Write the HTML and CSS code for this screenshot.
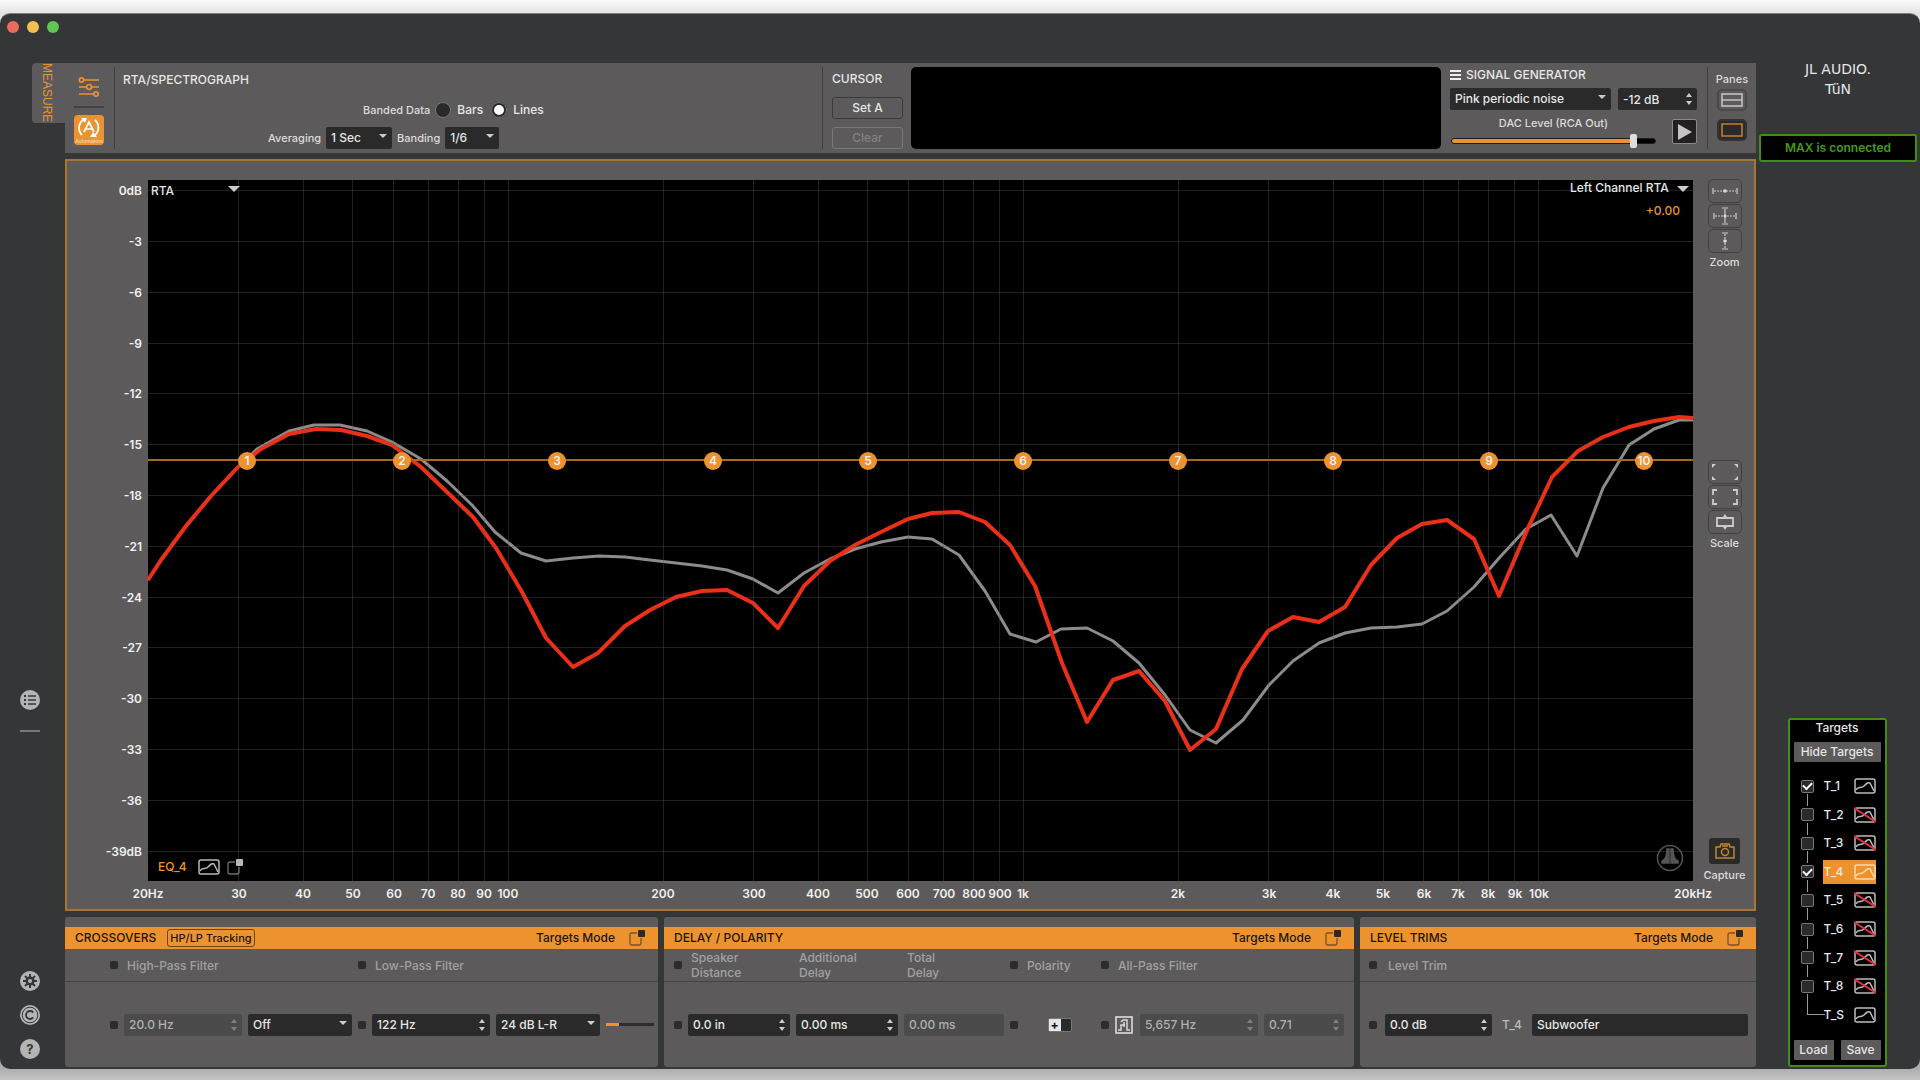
FILE: index.html
```html
<!DOCTYPE html>
<html lang="en">
<head>
    <meta charset="UTF-8">
    <meta name="viewport" content="width=device-width, initial-scale=1.0">
    <title>JL Audio TüN</title>
    <link rel="stylesheet" href="styles.css">
</head>
<body>

    <!-- Shared icons -->
    <svg class="sprite" aria-hidden="true">
        <symbol id="curve" viewBox="0 0 22 16">
            <rect x="1" y="1" width="20" height="14" rx="2" fill="none" stroke="currentColor" stroke-width="1.5"/>
            <path d="M2 12C4 8 7 11 10 8S14 4 16 5L20 13" fill="none" stroke="currentColor" stroke-width="1.5"/>
        </symbol>
        <symbol id="curve-off" viewBox="0 0 22 16">
            <rect x="1" y="1" width="20" height="14" rx="2" fill="none" stroke="currentColor" stroke-width="1.5"/>
            <path d="M2 12C4 8 7 11 10 8S14 4 16 5L20 13" fill="none" stroke="currentColor" stroke-width="1.5"/>
            <path d="M0 1L22 15" stroke="#e0303c" stroke-width="2"/>
        </symbol>
        <symbol id="popout" viewBox="0 0 16 16">
            <path d="M8 3H3Q1 3 1 5V13Q1 15 3 15H10Q12 15 12 13V8" fill="none" stroke="currentColor" stroke-opacity=".6" stroke-width="1.3"/>
            <rect x="9" y="0" width="7" height="7" rx="1" fill="currentColor"/>
        </symbol>
    </svg>

    <div class="window">
        <div class="titlebar">
            <span class="light red"></span>
            <span class="light yellow"></span>
            <span class="light green"></span>
        </div>

        <div class="layout">
            <!-- Left rail -->
            <nav class="rail">
                <button class="tab">MEASURE</button>
                <div class="rail-icons">
                    <button class="icon" aria-label="List">
                        <svg width="20" height="20" viewBox="0 0 20 20"><circle cx="10" cy="10" r="10" fill="#b4b4b6"/><path d="M4 6H6M4 10H6M4 14H6" stroke="#343638" stroke-width="2"/><path d="M8 6H16M8 10H16M8 14H16" stroke="#343638" stroke-width="1.4"/></svg>
                    </button>
                    <hr>
                    <button class="icon" aria-label="Settings">
                        <svg width="20" height="20" viewBox="0 0 20 20"><circle cx="10" cy="10" r="10" fill="#b4b4b6"/><path d="M10 3V17M3 10H17M5 5L15 15M15 5L5 15" stroke="#343638" stroke-width="2"/><circle cx="10" cy="10" r="4.6" fill="#343638"/><circle cx="10" cy="10" r="2" fill="#b4b4b6"/></svg>
                    </button>
                    <button class="icon" aria-label="Copyright">
                        <svg width="20" height="20" viewBox="0 0 20 20"><circle cx="10" cy="10" r="10" fill="#b4b4b6"/><circle cx="10" cy="10" r="7.8" fill="none" stroke="#343638"/><path d="M13.2 7.6A4 4 0 1 0 13.2 12.4" fill="none" stroke="#343638" stroke-width="1.8"/></svg>
                    </button>
                    <button class="icon help" aria-label="Help">?</button>
                </div>
            </nav>

            <main class="main">
                <!-- Toolbar -->
                <header class="toolbar">
                    <div class="modes">
                        <button class="icon" aria-label="Mixer">
                            <svg width="22" height="22" viewBox="0 0 22 22" fill="none" stroke="#ec932f" stroke-width="1.7"><path d="M6 4H21M1 11H8M14 11H21M1 18H15"/><circle cx="3.5" cy="4" r="2.2"/><circle cx="11" cy="11" r="2.5"/><circle cx="18" cy="18" r="2.2"/></svg>
                        </button>
                        <hr>
                        <button class="automation" aria-label="Automation">
                            <svg width="30" height="30" viewBox="0 0 30 30"><path d="M9 5A10 10 0 0 0 8 20M21 5A10 10 0 0 1 21 20" fill="none" stroke="#fff" stroke-width="1.8"/><path d="M7 3H13L11 8ZM23 22H16L19 17Z" fill="#fff"/><path d="M10 17L15 7L20 17M12 14H18" fill="none" stroke="#fff" stroke-width="1.7"/><text x="15" y="28" text-anchor="middle" class="tiny">Automation</text></svg>
                        </button>
                    </div>

                    <section class="rta">
                        <h2>RTA/SPECTROGRAPH</h2>
                        <div class="rta-line band">
                            <span class="small">Banded Data</span>
                            <label><input type="radio" name="band"> Bars</label>
                            <label><input type="radio" name="band" checked> Lines</label>
                        </div>
                        <div class="rta-line">
                            <label class="small" for="avg">Averaging</label>
                            <span class="select avg"><select id="avg"><option>1 Sec</option></select></span>
                            <label class="small" for="banding">Banding</label>
                            <span class="select banding"><select id="banding"><option>1/6</option></select></span>
                        </div>
                    </section>

                    <section class="cursor">
                        <h2>CURSOR</h2>
                        <button class="outline">Set A</button>
                        <button class="outline" disabled>Clear</button>
                    </section>

                    <div class="display"></div>

                    <section class="generator">
                        <h2><svg width="11" height="10" viewBox="0 0 11 10"><path d="M0 1H11M0 5H11M0 9H11" stroke="#eee" stroke-width="2"/></svg>SIGNAL GENERATOR</h2>
                        <div class="gen-row">
                            <span class="select noise"><select aria-label="Signal"><option>Pink periodic noise</option></select></span>
                            <span class="spin level"><input type="text" value="-12 dB" aria-label="Signal level"></span>
                        </div>
                        <div class="gen-row">
                            <div class="dac">
                                <label class="small" for="dac">DAC Level (RCA Out)</label>
                                <input type="range" id="dac" min="0" max="100" value="91">
                            </div>
                            <button class="play" aria-label="Play"><svg width="14" height="16" viewBox="0 0 14 16"><path d="M0 0L14 8L0 16Z" fill="#c4c4c4"/></svg></button>
                        </div>
                    </section>

                    <section class="panes">
                        <span class="small">Panes</span>
                        <button class="pane" aria-label="Two panes"><svg width="22" height="14" viewBox="0 0 22 14"><path d="M1 1H21V13H1ZM1 7H21" fill="none" stroke="#c8c8c8" stroke-width="1.5"/></svg></button>
                        <button class="pane on" aria-label="One pane"><svg width="22" height="14" viewBox="0 0 22 14"><path d="M1 1H21V13H1Z" fill="none" stroke="#c87e2c" stroke-width="1.5"/></svg></button>
                    </section>
                </header>

                <!-- Graph -->
                <section class="graph">
                    <div class="plot">
                        <svg class="chart" viewBox="-81 -19 1634 748" role="img" aria-label="RTA response">
                            <rect width="1545" height="701" fill="#000"/>
                            <path class="trace gray" d="M0 400L13 380L38 346L63 316L90 287L109 269L141 251L166 245L192 245L219 251L244 262L273 279L299 301L324 325L347 352L373 373L398 381L425 378L451 376L477 377L502 380L528 383L554 386L579 390L605 399L630 413L656 393L682 379L707 369L733 362L760 357L784 359L811 375L837 411L862 454L888 462L913 449L939 448L965 461L991 483L1017 515L1042 550L1068 563L1095 540L1121 505L1145 481L1171 463L1197 453L1223 448L1249 447L1274 444L1299 431L1326 407L1352 377L1378 349L1403 335L1429 376L1455 308L1481 265L1506 249L1531 240L1545 240"/>
                            <path class="trace red-line" d="M0 400L13 380L38 346L63 316L90 287L113 269L141 254L168 249L193 250L219 256L244 265L273 287L299 312L325 337L348 368L374 412L398 458L425 487L450 473L477 446L502 430L528 417L554 411L579 410L605 423L630 448L656 406L682 381L707 365L733 352L760 339L784 333L811 332L837 342L862 365L887 406L914 483L939 542L965 500L991 491L1017 521L1042 570L1068 549L1094 489L1120 451L1145 437L1171 442L1197 427L1223 385L1249 358L1274 344L1299 340L1326 359L1351 416L1380 348L1404 297L1430 271L1455 257L1481 247L1506 241L1531 237L1545 238"/>
                            <path class="grid" d="M0 10.5H1545M0 61.5H1545M0 112.5H1545M0 163.5H1545M0 213.5H1545M0 264.5H1545M0 315.5H1545M0 366.5H1545M0 417.5H1545M0 467.5H1545M0 518.5H1545M0 569.5H1545M0 620.5H1545M0 671.5H1545"/>
                            <path class="grid" d="M90.5 0V701M155.5 0V701M204.5 0V701M245.5 0V701M280.5 0V701M310.5 0V701M336.5 0V701M360.5 0V701M515.5 0V701M605.5 0V701M670.5 0V701M719.5 0V701M760.5 0V701M795.5 0V701M825.5 0V701M851.5 0V701M875.5 0V701M1030.5 0V701M1120.5 0V701M1185.5 0V701M1235.5 0V701M1275.5 0V701M1310.5 0V701M1340.5 0V701M1366.5 0V701M1390.5 0V701"/>

                            <!-- EQ bands -->
                            <path d="M0 280H1545" stroke="#a8691f" stroke-width="2"/>
                            <g fill="#ec932f">
                                <circle cx="99" cy="281" r="9"/><circle cx="254" cy="281" r="9"/><circle cx="409" cy="281" r="9"/><circle cx="565" cy="281" r="9"/><circle cx="720" cy="281" r="9"/><circle cx="875" cy="281" r="9"/><circle cx="1030" cy="281" r="9"/><circle cx="1185" cy="281" r="9"/><circle cx="1341" cy="281" r="9"/><circle cx="1496" cy="281" r="9"/>
                            </g>
                            <g class="axis" text-anchor="middle">
                                <text x="99" y="285">1</text><text x="254" y="285">2</text><text x="409" y="285">3</text><text x="565" y="285">4</text><text x="720" y="285">5</text><text x="875" y="285">6</text><text x="1030" y="285">7</text><text x="1185" y="285">8</text><text x="1341" y="285">9</text><text x="1496" y="285">10</text>
                            </g>

                            <!-- Level axis -->
                            <g class="axis" text-anchor="end">
                                <text x="-6" y="15">0dB</text><text x="-6" y="66">-3</text><text x="-6" y="117">-6</text><text x="-6" y="168">-9</text><text x="-6" y="218">-12</text><text x="-6" y="269">-15</text><text x="-6" y="320">-18</text><text x="-6" y="371">-21</text><text x="-6" y="422">-24</text><text x="-6" y="472">-27</text><text x="-6" y="523">-30</text><text x="-6" y="574">-33</text><text x="-6" y="625">-36</text><text x="-6" y="676">-39dB</text>
                            </g>

                            <!-- Frequency axis -->
                            <g class="axis" text-anchor="middle">
                                <text x="0" y="718">20Hz</text><text x="91" y="718">30</text><text x="155" y="718">40</text><text x="205" y="718">50</text><text x="246" y="718">60</text><text x="280" y="718">70</text><text x="310" y="718">80</text><text x="336" y="718">90</text><text x="360" y="718">100</text><text x="515" y="718">200</text><text x="606" y="718">300</text><text x="670" y="718">400</text><text x="719" y="718">500</text><text x="760" y="718">600</text><text x="796" y="718">700</text><text x="826" y="718">800</text><text x="852" y="718">900</text><text x="875" y="718">1k</text><text x="1030" y="718">2k</text><text x="1121" y="718">3k</text><text x="1185" y="718">4k</text><text x="1235" y="718">5k</text><text x="1276" y="718">6k</text><text x="1310" y="718">7k</text><text x="1340" y="718">8k</text><text x="1367" y="718">9k</text><text x="1391" y="718">10k</text><text x="1545" y="718">20kHz</text>
                            </g>

                            <g stroke="#555" fill="none" stroke-width="1.5">
                                <circle cx="1522" cy="678" r="12.5"/>
                                <path d="M1521 669H1519C1519 677 1517 680 1514 681V683H1521ZM1523 669H1525C1525 677 1527 680 1530 681V683H1523Z" fill="#555"/>
                            </g>
                        </svg>

                        <span class="overlay top-left select"><select aria-label="View"><option>RTA</option></select></span>
                        <div class="overlay top-right">
                            <span class="select"><select aria-label="Channel"><option>Left Channel RTA</option></select></span>
                            <span class="gain">+0.00</span>
                        </div>
                        <div class="overlay bottom-left">
                            <span>EQ_4</span>
                            <svg width="22" height="16"><use href="#curve"/></svg>
                            <svg width="16" height="16"><use href="#popout"/></svg>
                        </div>
                    </div>

                    <aside class="tools">
                        <div class="tool-group">
                            <button class="tool" aria-label="Zoom horizontal"><svg width="26" height="20" viewBox="0 0 26 20"><path d="M1 7V13M25 7V13" class="ln"/><path d="M2 10H24" class="ln dash"/><circle cx="13" cy="10" r="1.8" fill="#ddd"/></svg></button>
                            <button class="tool" aria-label="Zoom both"><svg width="26" height="20" viewBox="0 0 26 20"><path d="M2 7V13M24 7V13M10 2H16M10 18H16M13 3V17" class="ln"/><path d="M3 10H23" class="ln dash"/><circle cx="13" cy="10" r="1.5" fill="#ddd"/></svg></button>
                            <button class="tool" aria-label="Zoom vertical"><svg width="26" height="20" viewBox="0 0 26 20"><path d="M10 2H16M10 18H16" class="ln"/><path d="M13 3V17" class="ln dash"/><circle cx="13" cy="10" r="1.8" fill="#ddd"/></svg></button>
                            <span class="small">Zoom</span>
                        </div>
                        <div class="tool-group scale">
                            <button class="tool" aria-label="Scale out"><svg width="26" height="16" viewBox="0 0 26 16"><path d="M0 0H4L0 4ZM26 0H22L26 4ZM0 16H4L0 12ZM26 16H22L26 12Z" fill="#ccc"/></svg></button>
                            <button class="tool" aria-label="Scale in"><svg width="26" height="16" viewBox="0 0 26 16"><path d="M1 6V1H5M21 1H25V6M25 10V15H21M5 15H1V10" class="ln wide"/></svg></button>
                            <button class="tool" aria-label="Scale fit"><svg width="26" height="16" viewBox="0 0 26 16"><path d="M5 4H21V12H5Z" class="ln wide"/><path d="M11 3L13 0L15 3ZM11 13L13 16L15 13Z" fill="#ccc"/></svg></button>
                            <span class="small">Scale</span>
                        </div>
                        <div class="tool-group capture">
                            <button class="camera" aria-label="Capture"><svg width="20" height="16" viewBox="0 0 20 16" fill="none" stroke="#c08530" stroke-width="1.5"><path d="M1 4H5L6 1H14L15 4H19V15H1Z"/><circle cx="10" cy="9" r="3.5"/><path d="M7 3H13"/></svg></button>
                            <span class="small">Capture</span>
                        </div>
                    </aside>
                </section>

                <!-- Bottom panels -->
                <div class="panels">
                    <section class="panel">
                        <div class="bar">
                            <h3>CROSSOVERS</h3>
                            <button class="tracking">HP/LP Tracking</button>
                            <span class="mode">Targets Mode</span>
                            <svg width="16" height="16"><use href="#popout"/></svg>
                        </div>
                        <div class="cols cross head">
                            <input type="checkbox" id="hp"><label class="wide-2" for="hp">High-Pass Filter</label>
                            <input type="checkbox" id="lp"><label class="wide-3" for="lp">Low-Pass Filter</label>
                        </div>
                        <div class="cols cross body">
                            <input type="checkbox" aria-label="High-pass channel">
                            <span class="spin"><input type="text" value="20.0 Hz" aria-label="High-pass frequency" disabled></span>
                            <span class="select"><select aria-label="High-pass slope"><option>Off</option></select></span>
                            <input type="checkbox" aria-label="Low-pass channel">
                            <span class="spin"><input type="text" value="122 Hz" aria-label="Low-pass frequency"></span>
                            <span class="select"><select aria-label="Low-pass slope"><option>24 dB L-R</option></select></span>
                            <span class="meter"></span>
                        </div>
                    </section>

                    <section class="panel">
                        <div class="bar">
                            <h3>DELAY / POLARITY</h3>
                            <span class="mode">Targets Mode</span>
                            <svg width="16" height="16"><use href="#popout"/></svg>
                        </div>
                        <div class="cols delay head">
                            <input type="checkbox" id="dist"><label for="dist">Speaker<br>Distance</label>
                            <span>Additional<br>Delay</span>
                            <span>Total<br>Delay</span>
                            <input type="checkbox" id="pol"><label for="pol">Polarity</label>
                            <input type="checkbox" id="apf"><label class="wide-3" for="apf">All-Pass Filter</label>
                        </div>
                        <div class="cols delay body">
                            <input type="checkbox" aria-label="Delay channel">
                            <span class="spin"><input type="text" value="0.0 in" aria-label="Speaker distance"></span>
                            <span class="spin"><input type="text" value="0.00 ms" aria-label="Additional delay"></span>
                            <input type="text" value="0.00 ms" aria-label="Total delay" disabled>
                            <input type="checkbox" aria-label="Polarity channel">
                            <button class="toggle" aria-label="Invert polarity"><span>+</span></button>
                            <input type="checkbox" aria-label="All-pass channel">
                            <button class="icon" aria-label="All-pass type"><svg width="18" height="18" viewBox="0 0 18 18" fill="none" stroke="#ddd"><rect x="1" y="1" width="16" height="16" stroke-width="1.6"/><path d="M3 14H6V9H10M6 6Q7 4 9 4H12V14H15M9 6V11" stroke-width="1.4"/></svg></button>
                            <span class="spin"><input type="text" value="5,657 Hz" aria-label="All-pass frequency" disabled></span>
                            <span class="spin"><input type="text" value="0.71" aria-label="All-pass Q" disabled></span>
                        </div>
                    </section>

                    <section class="panel">
                        <div class="bar">
                            <h3>LEVEL TRIMS</h3>
                            <span class="mode">Targets Mode</span>
                            <svg width="16" height="16"><use href="#popout"/></svg>
                        </div>
                        <div class="cols trims head">
                            <input type="checkbox" id="trim"><label for="trim">Level Trim</label>
                        </div>
                        <div class="cols trims body">
                            <input type="checkbox" aria-label="Trim channel">
                            <span class="spin"><input type="text" value="0.0 dB" aria-label="Level trim"></span>
                            <label for="name">T_4</label>
                            <input type="text" id="name" value="Subwoofer">
                        </div>
                    </section>
                </div>
            </main>

            <!-- Right rail -->
            <aside class="side">
                <div class="logo"><span>JL AUDIO.</span><span>TüN</span></div>
                <div class="status">MAX is connected</div>

                <section class="targets">
                    <h3>Targets</h3>
                    <button>Hide Targets</button>
                    <ul>
                        <li><input type="checkbox" id="t1" checked><label for="t1">T_1<svg width="22" height="16"><use href="#curve"/></svg></label></li>
                        <li><input type="checkbox" id="t2"><label for="t2">T_2<svg width="22" height="16"><use href="#curve-off"/></svg></label></li>
                        <li><input type="checkbox" id="t3"><label for="t3">T_3<svg width="22" height="16"><use href="#curve-off"/></svg></label></li>
                        <li class="active"><input type="checkbox" id="t4" checked><label for="t4">T_4<svg width="22" height="16"><use href="#curve"/></svg></label></li>
                        <li><input type="checkbox" id="t5"><label for="t5">T_5<svg width="22" height="16"><use href="#curve-off"/></svg></label></li>
                        <li><input type="checkbox" id="t6"><label for="t6">T_6<svg width="22" height="16"><use href="#curve-off"/></svg></label></li>
                        <li><input type="checkbox" id="t7"><label for="t7">T_7<svg width="22" height="16"><use href="#curve-off"/></svg></label></li>
                        <li><input type="checkbox" id="t8"><label for="t8">T_8<svg width="22" height="16"><use href="#curve-off"/></svg></label></li>
                        <li class="sum"><span>T_S<svg width="22" height="16"><use href="#curve"/></svg></span></li>
                    </ul>
                    <div class="files">
                        <button>Load</button>
                        <button>Save</button>
                    </div>
                </section>
            </aside>
        </div>
    </div>

</body>
</html>
```
FILE: styles.css
```css
* {
    box-sizing: border-box;
}
body {
    margin: 0;
    height: 100vh;
    padding: 13px 0 11px;
    background: linear-gradient(#fafafa, #e4e4e4 13px, #acacac 1068px, #c4c4c4);
    font-family: Inter, "Liberation Sans", sans-serif;
    font-size: 12px;
    font-weight: 500;
    line-height: 16px;
    color: #e6e6e6;
}
h2, h3 {
    margin: 0;
    font-size: 12px;
    font-weight: 500;
    line-height: 16px;
}
button, input, select {
    font: inherit;
    color: inherit;
    margin: 0;
}
button {
    padding: 0;
    border: 0;
    background: none;
}
hr {
    margin: 0;
    border: 0;
}
svg {
    display: block;
    flex-shrink: 0;
}
.sprite {
    position: absolute;
    width: 0;
    height: 0;
}
.small {
    font-size: 11px;
    color: #dcdcdc;
}
.tiny {
    font-size: 5px;
    fill: #fbd9b0;
}

/* Window */
.window {
    height: 100%;
    display: flex;
    flex-direction: column;
    padding-bottom: 2px;
    background: #343638;
    border-top: 1px solid #808080;
    border-radius: 10px;
}
.titlebar {
    display: flex;
    gap: 8px;
    height: 49px;
    padding: 7px;
    flex-shrink: 0;
}
.light {
    width: 12px;
    height: 12px;
    border-radius: 50%;
}
.light.red { background: #ec6a5e; }
.light.yellow { background: #f4bf4f; }
.light.green { background: #61c554; }

.layout {
    flex: 1;
    min-height: 0;
    display: flex;
}

/* Left rail */
.rail {
    width: 65px;
    display: flex;
    flex-direction: column;
}
.tab {
    align-self: flex-end;
    width: 33px;
    height: 60px;
    padding-right: 4px;
    writing-mode: vertical-rl;
    font: 12px/14px "Liberation Sans", sans-serif;
    color: #ec932f;
    background: #5c5a5b;
    border-radius: 4px 0 0 4px;
}
.rail-icons {
    width: 60px;
    margin-top: auto;
    padding-bottom: 8px;
    display: flex;
    flex-direction: column;
    align-items: center;
    gap: 14px;
}
.rail-icons hr {
    width: 20px;
    height: 2px;
    margin: 6px 0 225px;
    background: #77787a;
}
.help {
    width: 20px;
    height: 20px;
    border-radius: 50%;
    background: #b4b4b6;
    color: #343638;
    font-size: 13px;
    font-weight: 700;
}

/* Toolbar */
.main {
    flex: 1;
    min-width: 0;
    display: flex;
    flex-direction: column;
    gap: 6px;
}
.toolbar {
    height: 90px;
    padding: 4px 0;
    display: flex;
    flex-shrink: 0;
    background: #5c5a5b;
}
.modes {
    width: 50px;
    padding: 9px 10px 4px 9px;
    display: flex;
    flex-direction: column;
    align-items: center;
    justify-content: space-between;
    border-right: 1px solid #403f40;
}
.modes hr {
    width: 30px;
    height: 2px;
    background: #434243;
}
.automation {
    background: #ec932f;
    border-radius: 4px;
}
.rta {
    flex: 1;
    padding: 5px 0 0 8px;
    border-right: 1px solid #403f40;
}
.rta-line {
    display: flex;
    align-items: center;
    gap: 5px;
    height: 22px;
    padding-left: 145px;
}
.rta-line.band {
    height: 24px;
    margin: 10px 0 5px;
    padding-left: 240px;
}
.rta-line.band label {
    display: flex;
    align-items: center;
    gap: 6px;
    margin-right: 3px;
}
input[type="radio"] {
    appearance: none;
    width: 16px;
    height: 16px;
    border-radius: 50%;
    border: 1px solid #777;
    background: #2a2a2a;
}
input[type="radio"]:checked {
    border: 3px solid #2a2a2a;
    background: #fff;
    outline: 1px solid #777;
    outline-offset: -1px;
}

/* Form fields */
.select, .spin {
    position: relative;
    display: block;
    min-width: 0;
}
select, input[type="text"] {
    appearance: none;
    display: block;
    width: 100%;
    height: 22px;
    padding: 0 5px;
    border: 0;
    border-radius: 2px;
    background: #2a2a2a;
    color: #e6e6e6;
    outline: 0;
}
input[type="text"]:disabled {
    background: #4c4b4c;
    color: #b0b0b0;
}
.select::after {
    content: "";
    position: absolute;
    right: 5px;
    top: 7px;
    border: 4px solid transparent;
    border-top-color: #ccc;
    border-bottom: 0;
    pointer-events: none;
}
.spin::before, .spin::after {
    content: "";
    position: absolute;
    right: 5px;
    border: 3px solid transparent;
}
.spin::before {
    top: 5px;
    border-bottom: 4px solid #ccc;
    border-top: 0;
}
.spin::after {
    bottom: 5px;
    border-top: 4px solid #ccc;
    border-bottom: 0;
}
.spin:has(:disabled)::before, .spin:has(:disabled)::after {
    opacity: .4;
}
.avg { width: 66px; }
.banding { width: 54px; }
.noise { width: 161px; }
.level { width: 79px; }

.cursor {
    width: 88px;
    padding: 4px 8px 0 9px;
}
.outline {
    display: block;
    width: 71px;
    height: 22px;
    margin-top: 10px;
    border: 1px solid #3c3b3c;
    border-radius: 3px;
}
.outline + .outline {
    margin-top: 8px;
}
.outline:disabled {
    border-color: #777;
    color: #828182;
}
.display {
    width: 530px;
    background: #000;
    border-radius: 5px;
}
.generator {
    width: 267px;
    padding: 0 10px 0 9px;
    border-right: 1px solid #403f40;
}
.generator h2 {
    display: flex;
    align-items: center;
    gap: 5px;
    margin-bottom: 5px;
}
.gen-row {
    display: flex;
    justify-content: space-between;
    align-items: center;
    gap: 7px;
    margin-bottom: 5px;
}
.dac {
    display: flex;
    flex-direction: column;
    align-items: center;
    width: 207px;
}
input[type="range"] {
    appearance: none;
    width: 205px;
    height: 14px;
    margin-top: 3px;
    background: none;
}
input[type="range"]::-webkit-slider-runnable-track {
    height: 6px;
    border-radius: 3px;
    border: 1px solid #1c1c1c;
    background: linear-gradient(90deg, #ec932f 90%, #000 90%);
}
input[type="range"]::-webkit-slider-thumb {
    appearance: none;
    width: 7px;
    height: 14px;
    margin-top: -5px;
    border-radius: 2px;
    background: #dedede;
}
.play {
    display: grid;
    place-items: center;
    width: 25px;
    height: 25px;
    background: #232021;
    border: 1px solid #8a8a8a;
    border-radius: 2px;
}
.panes {
    width: 48px;
    display: flex;
    flex-direction: column;
    align-items: center;
    padding-top: 4px;
}
.pane {
    display: grid;
    place-items: center;
    width: 30px;
    height: 22px;
    margin-top: 2px;
    border: 2px solid #4a494a;
    border-radius: 5px;
}
.pane.on {
    margin-top: 8px;
    background: #2a2a2a;
    border-color: #333;
}

/* Graph */
.graph {
    flex: 1;
    min-height: 0;
    display: flex;
    background: #5c5a5b;
    border: 2px solid #a87432;
}
.plot {
    position: relative;
    flex: 1;
    min-width: 0;
}
.chart {
    width: 100%;
    height: 100%;
    overflow: visible;
}
.grid {
    stroke: rgba(95, 95, 95, .35);
    fill: none;
}
.trace {
    fill: none;
    stroke-width: 4;
    stroke-linejoin: round;
}
.trace.gray { stroke: #8c8c8c; stroke-width: 3; }
.trace.red-line { stroke: #ec2f18; }
.axis {
    font-size: 12px;
    font-weight: 600;
    fill: #f0f0f0;
}
.overlay {
    position: absolute;
}
.overlay select {
    height: 18px;
    padding: 0;
    background: none;
}
.overlay .select::after, .overlay.select::after {
    right: 0;
    border-width: 6px;
    border-bottom: 0;
}
.top-left {
    left: 84px;
    top: 21px;
    width: 89px;
}
.overlay.top-left::after {
    top: 4px;
}
.top-right {
    top: 18px;
    right: 12px;
    display: flex;
    flex-direction: column;
    align-items: flex-end;
    gap: 6px;
}
.top-right .select {
    width: 119px;
}
.gain {
    margin-right: 9px;
    color: #ec932f;
}
.bottom-left {
    left: 91px;
    bottom: 34px;
    display: flex;
    align-items: center;
    gap: 11px;
    color: #ec932f;
}
.bottom-left svg {
    color: #b8b8b8;
}
.bottom-left svg:last-child {
    margin-left: -4px;
}
.tools {
    width: 53px;
    padding: 18px 6px 26px 0;
    display: flex;
    flex-direction: column;
}
.tool-group {
    display: flex;
    flex-direction: column;
    align-items: center;
    gap: 1px;
}
.tool-group.scale { margin-top: 190px; }
.tool-group.capture { margin-top: auto; }
.tool {
    display: grid;
    place-items: center;
    width: 34px;
    height: 24px;
    border: 1px solid #424142;
    border-radius: 5px;
}
.ln {
    fill: none;
    stroke: #ccc;
    stroke-width: 1.2;
}
.ln.wide { stroke-width: 1.8; }
.ln.dash { stroke-dasharray: 2 1; }
.camera {
    display: grid;
    place-items: center;
    width: 31px;
    height: 26px;
    margin-bottom: 2px;
    background: #2a2a2a;
    border-radius: 3px;
}

/* Bottom panels */
.panels {
    display: grid;
    grid-template-columns: 593fr 690fr 396fr;
    gap: 6px;
    flex-shrink: 0;
}
.panel {
    min-width: 0;
    height: 150px;
    padding-top: 10px;
    display: flex;
    flex-direction: column;
    background: #5c5a5b;
    border-radius: 3px;
}
.bar {
    display: flex;
    align-items: center;
    height: 22px;
    padding: 0 13px 0 10px;
    background: #ec932f;
    color: #1c1408;
}
.bar svg { color: #2a2a2a; }
.mode {
    margin: 0 14px 0 auto;
}
.tracking {
    height: 18px;
    margin-left: 11px;
    padding: 0 2px;
    border: 1px solid #6b4518;
    border-radius: 3px;
    font-size: 11px;
    line-height: 14px;
}
.cols {
    display: grid;
    align-items: center;
    gap: 6px;
}
.cross {
    grid-template-columns: 8px 118fr 104fr 8px 118fr 104fr 48px;
    padding: 0 4px 0 45px;
}
.delay {
    grid-template-columns: 8px 102fr 102fr 100fr 8px 71fr 8px 19px 118fr 80fr;
    padding: 0 10px;
}
.trims {
    grid-template-columns: 8px 107fr 24px 216fr;
    gap: 8px;
    padding: 0 8px 0 9px;
}
.head {
    height: 33px;
    border-bottom: 1px solid #454445;
    color: #a2a1a2;
}
.head label, .head span {
    padding-left: 3px;
    line-height: 15px;
}
.wide-2 { grid-column: span 2; }
.wide-3 { grid-column: span 3; }
.body {
    flex: 1;
}
.body label {
    text-align: center;
    color: #bbb;
}
.cols input[type="checkbox"] {
    appearance: none;
    width: 8px;
    height: 8px;
    border-radius: 2px;
    background: #2c2c2c;
}
.meter {
    height: 3px;
    background: linear-gradient(90deg, #ec932f 13px, #2c2c2c 13px);
}
.toggle {
    justify-self: center;
    width: 24px;
    height: 14px;
    background: #2a2a2a;
    border: 1px solid #777;
    border-radius: 2px;
}
.toggle span {
    display: block;
    width: 12px;
    height: 12px;
    background: #e6e6e6;
    color: #111;
    font-weight: 700;
    line-height: 12px;
}

/* Right rail */
.side {
    width: 164px;
    display: flex;
    flex-direction: column;
    align-items: center;
}
.logo {
    height: 71px;
    display: flex;
    flex-direction: column;
    align-items: center;
    gap: 8px;
    font: 14px/12px "DejaVu Sans", sans-serif;
}
.status {
    width: 158px;
    height: 28px;
    border: 2px solid #3f8f14;
    border-radius: 3px;
    background: #000;
    color: #459a18;
    font-weight: 600;
    line-height: 24px;
    text-align: center;
}
.targets {
    width: 99px;
    margin-top: auto;
    margin-right: 2px;
    padding: 0 4px 5px;
    background: #000;
    border: 2px solid #3f8f14;
    border-radius: 3px;
}
.targets h3 {
    text-align: center;
}
.targets button {
    display: block;
    width: 100%;
    height: 20px;
    margin-top: 6px;
    background: #5c5a5b;
    border-radius: 1px;
}
.targets ul {
    list-style: none;
    height: 257px;
    margin: 10px 0 5px;
    padding: 0 5px 0 7px;
    display: grid;
    grid-auto-rows: 1fr;
}
.targets li {
    position: relative;
    display: flex;
    align-items: center;
    justify-content: space-between;
}
.targets li label, .targets li > span {
    display: flex;
    align-items: center;
    justify-content: space-between;
    width: 53px;
    height: 24px;
    margin-left: auto;
    padding-left: 1px;
}
.targets li svg {
    color: #bcbcbc;
}
.targets li.active label {
    background: #ec932f;
}
.targets li.active svg {
    color: #f8d8b0;
}
.targets input {
    appearance: none;
    width: 13px;
    height: 13px;
    display: grid;
    place-items: center;
    border: 1px solid #777;
    border-radius: 2px;
    background: #2a2a2a;
}
.targets input:checked::after {
    content: "";
    width: 7px;
    height: 4px;
    margin-bottom: 2px;
    border: solid #fff;
    border-width: 0 0 2px 2px;
    transform: rotate(-45deg);
}
/* Tree line between the boxes */
.targets li:not(.sum)::after {
    content: "";
    position: absolute;
    left: 6px;
    top: 22px;
    width: 1px;
    height: 12px;
    background: #999;
}
.targets .sum::before {
    content: "";
    position: absolute;
    left: 6px;
    top: -4px;
    width: 17px;
    height: 18px;
    border: solid #999;
    border-width: 0 0 1px 1px;
}
.files {
    display: grid;
    grid-template-columns: 1fr 1fr;
    gap: 7px;
}
```
